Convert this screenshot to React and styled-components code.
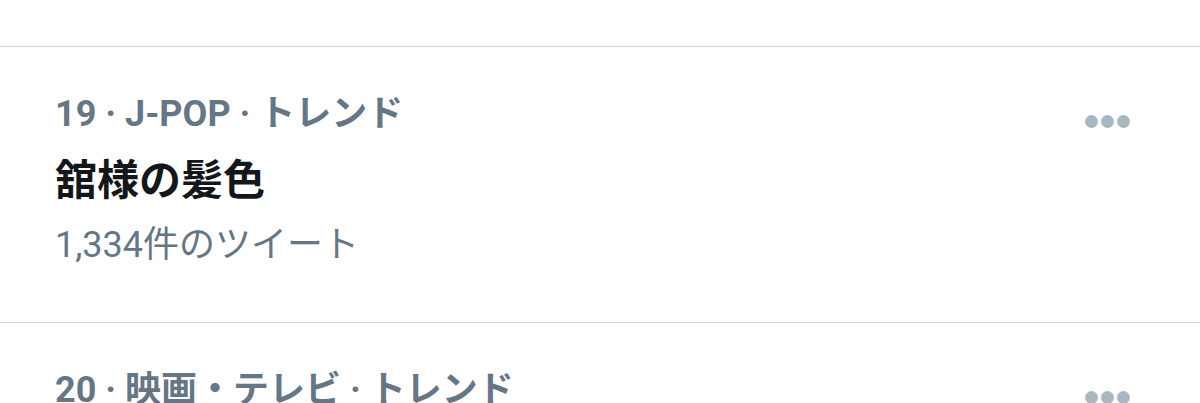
import React from "react";
import styled, { createGlobalStyle } from "styled-components";

const GlobalStyle = createGlobalStyle`
  html, body {
    margin: 0;
    padding: 0;
    background: #ffffff;
  }
  body {
    font-family: Roboto, "Noto Sans CJK JP", sans-serif;
  }
`;

const Page = styled.div`
  width: 1200px;
  height: 403px;
  overflow: hidden;
  padding-top: 46px;
  box-sizing: border-box;
`;

const Trend = styled.div`
  display: flex;
  justify-content: space-between;
  align-items: flex-start;
  padding: 46px 70px 56px 55px;
  border-top: 1px solid #ccd6dd;
`;

const Info = styled.div`
  display: flex;
  flex-direction: column;
`;

const Meta = styled.div`
  font-size: 36px;
  line-height: 42px;
  font-weight: 700;
  color: #657786;
  white-space: nowrap;
`;

const Title = styled.div`
  margin-top: 20px;
  font-size: 42px;
  line-height: 52px;
  font-weight: 700;
  color: #14171a;
`;

const Count = styled.div`
  margin-top: 17px;
  font-size: 36px;
  line-height: 42px;
  color: #657786;
`;

const More = styled.div`
  display: flex;
  gap: 3px;
  margin-top: 22px;
`;

const Dot = styled.span`
  width: 13px;
  height: 13px;
  border-radius: 50%;
  background: #aab8c2;
`;

const trends = [
  { rank: 19, category: "J-POP", title: "舘様の髪色", count: "1,334件のツイート" },
  { rank: 20, category: "映画・テレビ", title: "", count: "" },
];

export default function App() {
  return (
    <>
      <GlobalStyle />
      <Page>
        {trends.map((t) => (
          <Trend key={t.rank}>
            <Info>
              <Meta>
                {t.rank} · {t.category} · トレンド
              </Meta>
              {t.title && <Title>{t.title}</Title>}
              {t.count && <Count>{t.count}</Count>}
            </Info>
            <More>
              <Dot />
              <Dot />
              <Dot />
            </More>
          </Trend>
        ))}
      </Page>
    </>
  );
}
